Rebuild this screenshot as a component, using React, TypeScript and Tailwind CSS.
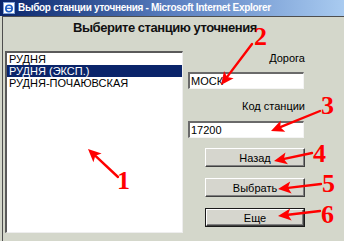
import React from 'react';

type Arrow = { x1: number; y1: number; x2: number; y2: number };

const arrows: Arrow[] = [
  { x1: 118, y1: 177, x2: 88, y2: 149 },
  { x1: 252, y1: 44, x2: 221, y2: 85 },
  { x1: 320, y1: 111, x2: 271, y2: 131 },
  { x1: 312, y1: 153, x2: 274, y2: 161 },
  { x1: 321, y1: 184, x2: 278, y2: 189 },
  { x1: 320, y1: 211, x2: 278, y2: 216 },
];

const labels = [
  { n: '1', cls: 'left-[117px] top-[168px]' },
  { n: '2', cls: 'left-[254px] top-[24px]' },
  { n: '3', cls: 'left-[321px] top-[93px]' },
  { n: '4', cls: 'left-[313px] top-[141px]' },
  { n: '5', cls: 'left-[322px] top-[171px]' },
  { n: '6', cls: 'left-[321px] top-[202px]' },
];

function headPoints(a: Arrow) {
  const dx = a.x2 - a.x1;
  const dy = a.y2 - a.y1;
  const len = Math.hypot(dx, dy);
  const ux = dx / len;
  const uy = dy / len;
  const L = 13;
  const W = 6;
  const bx = a.x2 - ux * L;
  const by = a.y2 - uy * L;
  return `${a.x2},${a.y2} ${bx - uy * W},${by + ux * W} ${bx + ux * 3},${by + uy * 3} ${bx + uy * W},${by - ux * W}`;
}

function lineEnd(a: Arrow) {
  const dx = a.x2 - a.x1;
  const dy = a.y2 - a.y1;
  const len = Math.hypot(dx, dy);
  return { x: a.x2 - (dx / len) * 8, y: a.y2 - (dy / len) * 8 };
}

function Button({ label, isDefault }: { label: string; isDefault?: boolean }) {
  return (
    <div
      className={
        'w-[100px] h-[19px] ' +
        (isDefault ? 'border border-[#1a1a1a]' : '')
      }
    >
      <div className="w-full h-full flex items-center justify-center bg-[#d6d6ce] border-t border-l border-t-white border-l-white border-b border-r border-b-[#404040] border-r-[#404040] shadow-[inset_-1px_-1px_0_#808080] text-black text-[11px]">
        {label}
      </div>
    </div>
  );
}

function Field({ value }: { value: string }) {
  return (
    <div className="w-[116px] h-[17px] bg-white border-t-2 border-l-2 border-t-[#6a6a6a] border-l-[#6a6a6a] border-b border-r border-b-[#f4f4f4] border-r-[#f4f4f4] pl-[1px] flex items-center text-[11px] text-black">
      {value}
    </div>
  );
}

export default function App() {
  const stations = ['РУДНЯ', 'РУДНЯ (ЭКСП.)', 'РУДНЯ-ПОЧАЮВСКАЯ'];
  const selected = 1;

  return (
    <div className="relative w-[344px] h-[241px] overflow-hidden bg-[#d4d7cb] font-['Liberation_Sans',Arial,sans-serif] text-[11px] leading-[12px] text-black">
      {/* title bar */}
      <div className="h-[16px] flex items-center bg-linear-to-r from-[#0a246a] via-[#5a7fc0] to-[#a9cbf0]">
        <svg width="12" height="12" viewBox="0 0 12 12" className="ml-[3px]">
          <rect x="0.5" y="0.5" width="11" height="11" fill="#ffffff" stroke="#7da0d8" />
          <circle cx="6" cy="6.5" r="3.2" fill="none" stroke="#1a5bc4" strokeWidth="1.6" />
          <path d="M3 6.3h6" stroke="#1a5bc4" strokeWidth="1.2" />
        </svg>
        <span className="ml-[3px] text-white font-bold text-[10px] leading-[14px] tracking-[-0.3px]">
          Выбор станции уточнения - Microsoft Internet Explorer
        </span>
      </div>

      {/* window body */}
      <div className="ml-[2px] h-[225px] border-t border-l border-[#4e4e4e]">
        <div className="pt-[3px] pl-[70px]">
          <div className="w-fit font-bold text-[13px] leading-[16px] tracking-[-0.45px] text-[#111]">
            Выберите станцию уточнения
          </div>
        </div>

        <div className="mt-[15px] flex">
          {/* list box */}
          <div className="ml-[2px] w-[178px] h-[182px] bg-white border-t-2 border-l-2 border-t-[#5a5a5a] border-l-[#5a5a5a] border-b border-r border-b-[#eeeeee] border-r-[#eeeeee]">
            {stations.map((s, i) => (
              <div
                key={s}
                className={
                  'h-[12px] pl-[2px] leading-[12px] whitespace-nowrap ' +
                  (i === selected ? 'bg-[#0a246a] text-white' : 'text-black')
                }
              >
                {s}
              </div>
            ))}
          </div>

          {/* right column */}
          <div className="ml-[5px] w-[117px] flex flex-col items-end">
            <div className="mt-[1px] leading-[12px]">Дорога</div>
            <div className="mt-[8px] self-start">
              <Field value="МОСК" />
            </div>
            <div className="mt-[11px] leading-[12px]">Код станции</div>
            <div className="mt-[9px] self-start">
              <Field value="17200" />
            </div>
            <div className="mt-[10px]">
              <Button label="Назад" />
            </div>
            <div className="mt-[11px]">
              <Button label="Выбрать" />
            </div>
            <div className="mt-[11px]">
              <Button label="Еще" isDefault />
            </div>
          </div>
        </div>
      </div>

      {/* red annotations */}
      <svg width="344" height="241" className="absolute left-0 top-0 pointer-events-none">
        {arrows.map((a, i) => {
          const e = lineEnd(a);
          return (
            <g key={i}>
              <line x1={a.x1} y1={a.y1} x2={e.x} y2={e.y} stroke="#ff0000" strokeWidth="2.4" strokeLinecap="round" />
              <polygon points={headPoints(a)} fill="#ff0000" />
            </g>
          );
        })}
      </svg>
      {labels.map((l) => (
        <span
          key={l.n}
          className={
            'absolute font-bold text-[26px] leading-[26px] text-[#ff0000] font-["Liberation_Serif","Times_New_Roman",serif] ' +
            l.cls
          }
        >
          {l.n}
        </span>
      ))}
    </div>
  );
}
